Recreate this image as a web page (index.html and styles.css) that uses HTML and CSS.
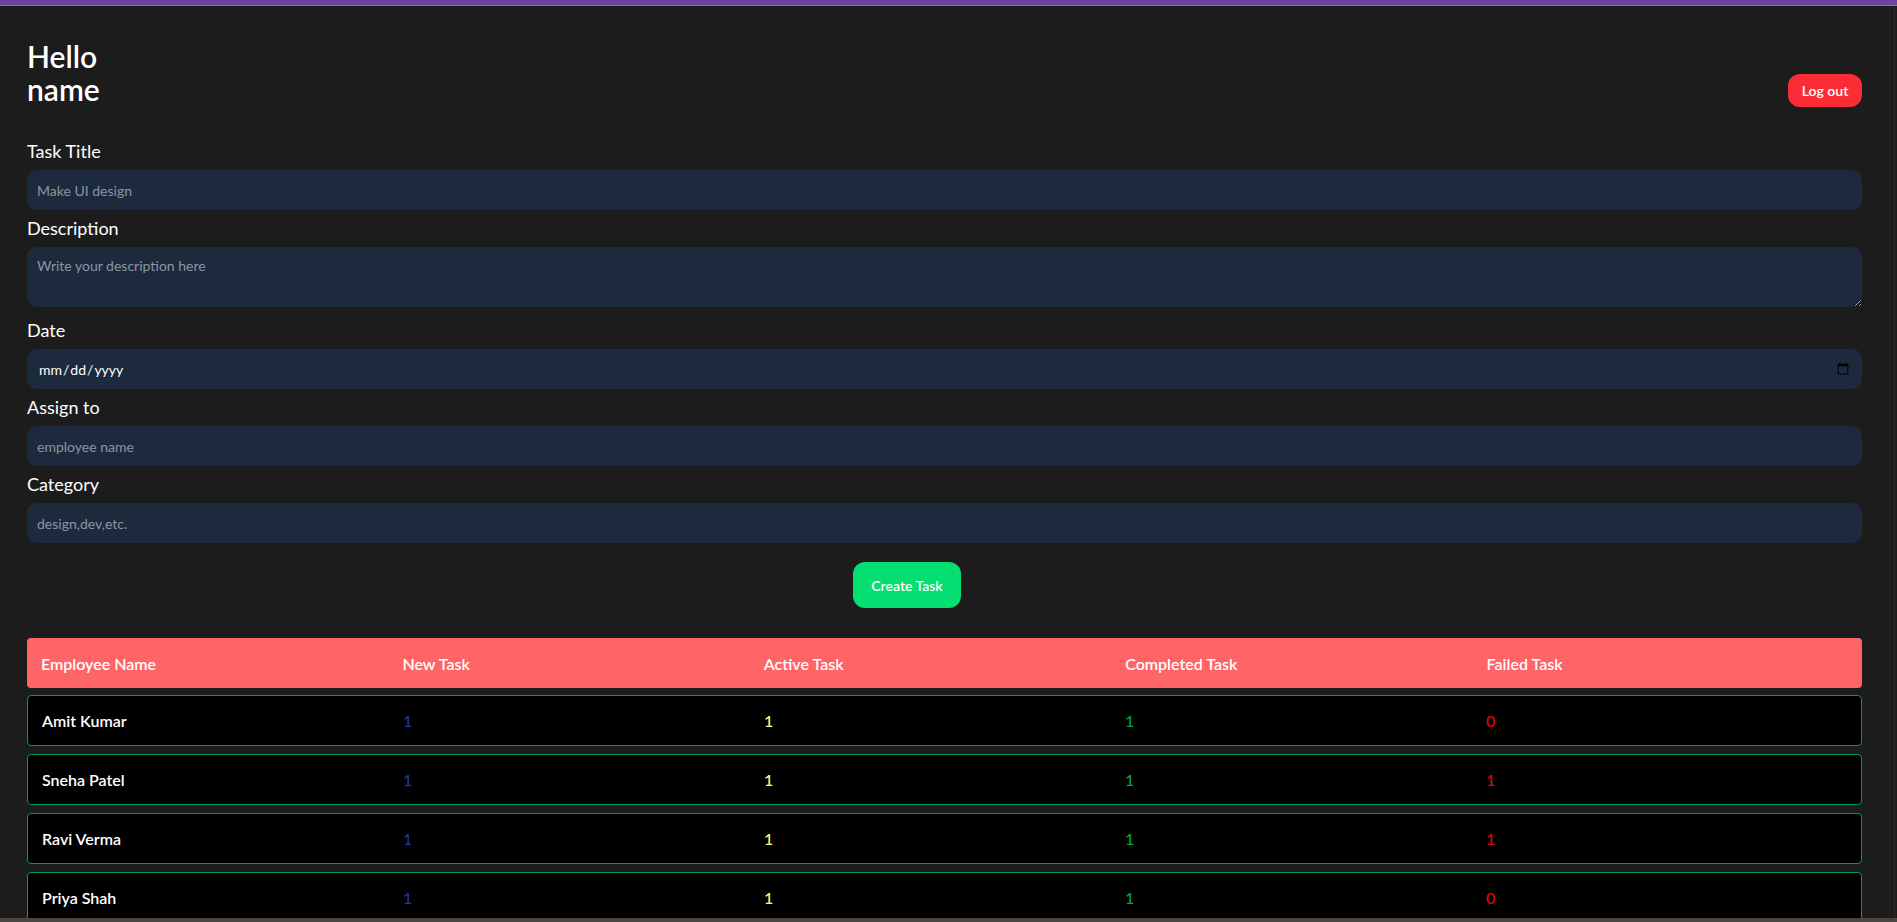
FILE: index.html
```html
<!DOCTYPE html>
<html lang="en">
<head>
<meta charset="utf-8">
<title>Admin Dashboard</title>
<link rel="stylesheet" href="styles.css">
</head>
<body>
<div class="topbar"></div>
<div class="page">
  <header class="header">
    <h1 class="greeting">Hello<br>name</h1>
    <button class="logout">Log out</button>
  </header>

  <form class="task-form">
    <label class="field-label">Task Title</label>
    <input class="field-input" type="text" placeholder="Make UI design">

    <label class="field-label">Description</label>
    <textarea class="field-input field-textarea" placeholder="Write your description here"></textarea>

    <label class="field-label">Date</label>
    <input class="field-input field-date" type="date">

    <label class="field-label">Assign to</label>
    <input class="field-input" type="text" placeholder="employee name">

    <label class="field-label">Category</label>
    <input class="field-input" type="text" placeholder="design,dev,etc.">

    <div class="form-actions">
      <button class="create-btn" type="button">Create Task</button>
    </div>
  </form>

  <section class="task-table">
    <div class="table-head">
      <h2>Employee Name</h2>
      <h2>New Task</h2>
      <h2>Active Task</h2>
      <h2>Completed Task</h2>
      <h2>Failed Task</h2>
    </div>
    <div class="table-row">
      <span class="name">Amit Kumar</span>
      <span class="num new">1</span>
      <span class="num active">1</span>
      <span class="num done">1</span>
      <span class="num failed">0</span>
    </div>
    <div class="table-row">
      <span class="name">Sneha Patel</span>
      <span class="num new">1</span>
      <span class="num active">1</span>
      <span class="num done">1</span>
      <span class="num failed">1</span>
    </div>
    <div class="table-row">
      <span class="name">Ravi Verma</span>
      <span class="num new">1</span>
      <span class="num active">1</span>
      <span class="num done">1</span>
      <span class="num failed">1</span>
    </div>
    <div class="table-row">
      <span class="name">Priya Shah</span>
      <span class="num new">1</span>
      <span class="num active">1</span>
      <span class="num done">1</span>
      <span class="num failed">0</span>
    </div>
  </section>
</div>
<div class="scroll-edge"></div>
<div class="taskbar"></div>
</body>
</html>
```

FILE: styles.css
```css
* {
  box-sizing: border-box;
}

html, body {
  margin: 0;
  padding: 0;
}

body {
  background: #1c1c1c;
  color: #ffffff;
  font-family: "Lato", "Open Sans", sans-serif;
  overflow: hidden;
  height: 922px;
}

.topbar {
  height: 6px;
  background: #6d43a1;
  border-bottom: 1px solid #9468c6;
}

.page {
  padding: 34px 35px 0 27px;
}

.header {
  display: flex;
  justify-content: space-between;
  align-items: flex-end;
}

.greeting {
  margin: 0;
  font-size: 30px;
  line-height: 33px;
  font-weight: 600;
}

.logout {
  width: 74px;
  height: 33px;
  margin-bottom: -1px;
  border: none;
  border-radius: 12px;
  background: #fb2c36;
  color: #ffffff;
  font-family: inherit;
  font-size: 14px;
  font-weight: 600;
  padding: 0;
}

.task-form {
  margin-top: 31px;
}

.field-label {
  display: block;
  font-size: 18px;
  line-height: 28px;
  margin-bottom: 5px;
}

.field-input {
  display: block;
  width: 100%;
  height: 40px;
  margin: 0 0 4px 0;
  padding: 0 10px;
  border: none;
  outline: none;
  border-radius: 10px;
  background: #1d293d;
  color: #ffffff;
  font-family: inherit;
  font-size: 14px;
}

.field-input::placeholder {
  color: #8d95a2;
}

.field-textarea {
  height: 60px;
  padding: 9px 10px;
  line-height: 20px;
  margin-bottom: 9px;
  resize: vertical;
}

.field-date {
  padding-left: 11px;
  padding-right: 10px;
  color-scheme: light;
  color: #ffffff;
}

.form-actions {
  display: flex;
  justify-content: center;
  padding-right: 75px;
  margin-top: 19px;
}

.create-btn {
  width: 108px;
  height: 46px;
  border: none;
  border-radius: 12px;
  background: #05df72;
  color: #ffffff;
  font-family: inherit;
  font-size: 14px;
  font-weight: 600;
  padding: 0;
}

.task-table {
  margin-top: 30px;
}

.table-head {
  display: grid;
  grid-template-columns: repeat(5, 1fr);
  align-items: center;
  height: 50px;
  padding: 0 14px;
  background: #ff6467;
  border-radius: 4px;
  margin-bottom: 7px;
}

.table-head h2 {
  margin: 0;
  font-size: 16px;
  font-weight: 600;
  color: #ffffff;
}

.table-row {
  display: grid;
  grid-template-columns: repeat(5, 1fr);
  align-items: center;
  height: 51px;
  padding: 0 14px;
  background: #000000;
  border: 1px solid #009966;
  border-radius: 4px;
  margin-bottom: 8px;
  font-size: 16px;
}

.name {
  font-weight: 600;
  color: #ffffff;
}

.num {
  font-weight: 500;
}

.num.new {
  color: #1c37a6;
}

.num.active {
  color: #ffff78;
}

.num.done {
  color: #00a63e;
}

.num.failed {
  color: #e7000b;
}

.scroll-edge {
  position: fixed;
  top: 7px;
  right: 2px;
  width: 1px;
  height: 911px;
  background: #2b2b2b;
}

.taskbar {
  position: fixed;
  left: 0;
  right: 0;
  bottom: 0;
  height: 4px;
  background: #4a4540;
}
```
